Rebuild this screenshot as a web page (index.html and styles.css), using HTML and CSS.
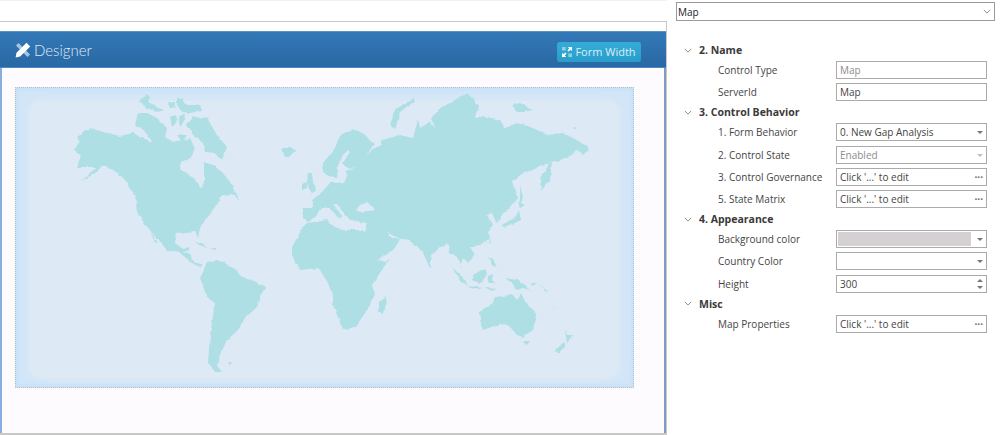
FILE: index.html
```html
<!DOCTYPE html>
<html lang="en">
<head>
    <meta charset="UTF-8">
    <title>Designer</title>
    <link rel="stylesheet" href="styles.css">
</head>
<body>
    <div class="workspace">
        <div class="tab-strip"></div>
        <div class="designer">
            <div class="designer-head">
                <div class="designer-title">
                    <svg class="title-icon" viewBox="0 0 16 16">
                        <path class="ruler" d="M1 3.5 3.5 1 15 12.5 12.5 15Z"/>
                        <path d="M11.5 0.8 15.2 4.5 5.2 14.5 0.6 15.4 1.5 10.8Z"/>
                    </svg>
                    <span>Designer</span>
                </div>
                <button class="width-button">
                    <svg class="width-icon" viewBox="0 0 10 10">
                        <path d="M5.8 0H10V4.2L8.6 2.8 6.6 4.6 5.4 3.4 7.2 1.4Z"/>
                        <path d="M4.2 10H0V5.8L1.4 7.2 3.4 5.4 4.6 6.6 2.8 8.6Z"/>
                        <path class="faint" d="M0 0H3.6V3.6H0ZM6.4 6.4H10V10H6.4Z"/>
                    </svg>
                    Form Width
                </button>
            </div>
            <div class="designer-body">
                <div class="map">
                    <!-- countries traced by hand, in page coordinates -->
                    <svg class="world" viewBox="16 88 617 299">
                        <defs>
                            <!-- roughens the straight segments into a coastline -->
                            <filter id="coast" x="0" y="0" width="100%" height="100%">
                                <feTurbulence type="fractalNoise" baseFrequency="0.14" numOctaves="2" seed="4"/>
                                <feDisplacementMap in="SourceGraphic" scale="3.5" xChannelSelector="R" yChannelSelector="G"/>
                                <feGaussianBlur stdDeviation="0.35"/>
                            </filter>
                        </defs>
                        <g class="land" filter="url(#coast)">
                            <!-- north and central america -->
                            <path d="M76 138 82 132 90 128 103 132 120 136 133 133 150 142 173 142 190 138 195 148 192 156 182 162 180 170 197 180 201 190 204 182 204 162 213 165 222 172 230 182 235 192 240 200 232 194 220 197 215 207 207 217 200 228 198 238 195 231 177 233 175 242 183 248 190 246 188 252 182 252 190 255 195 262 203 265 200 267 192 263 180 253 167 250 160 242 150 230 138 215 137 202 132 190 123 178 113 170 103 165 95 173 80 182 92 172 95 167 77 167 82 155 74 150 80 142Z"/>
                            <path d="M150 230 158 243 155 242ZM195 243 202 243 208 248 202 246ZM210 248 217 248 215 250Z"/>
                            <!-- arctic islands -->
                            <path d="M139 102 145 95 150 97 148 102 157 107 163 110 157 112 147 108ZM177 98 182 99 187 105 200 105 202 111 190 113 182 112 177 105ZM168 102 175 102 175 108 170 109Z"/>
                            <path d="M135 125 138 113 147 113 157 118 167 128 165 138 173 142 153 142 145 132 140 127ZM170 117 175 115 177 123 172 127ZM178 115 185 114 183 123 180 127ZM187 125 193 117 207 118 217 135 227 147 222 160 213 153 205 152 203 142 193 135ZM177 135 187 135 182 142Z"/>
                            <!-- south america -->
                            <path d="M200 278 207 262 217 260 233 267 243 277 265 286 257 307 245 318 238 330 227 340 220 355 217 365 222 372 215 372 208 362 210 335 215 303 207 297ZM228 363 232 363 230 366Z"/>
                            <!-- iceland, britain, ireland -->
                            <path d="M281 148 290 147 296 151 290 157 285 157ZM308 173 312 173 313 182 317 190 312 193 308 187 307 182ZM302 185 307 182 307 188 302 190Z"/>
                            <!-- eurasia with the black sea cut out -->
                            <path fill-rule="evenodd" d="M303 218 303 208 313 208 312 200 322 192 330 183 335 183 343 182 348 176 345 172 357 167 348 169 342 163 350 152 348 150 343 155 338 165 337 178 331 177 323 172 323 163 335 148 340 135 352 130 363 133 375 145 367 153 380 145 382 140 400 135 413 138 418 120 420 128 430 122 435 128 432 118 440 108 460 97 467 93 479 105 475 117 487 117 500 120 505 128 517 123 533 128 547 135 563 133 577 140 589 148 583 154 577 150 572 155 560 160 550 162 540 178 541 191 550 180 552 162 537 168 520 175 512 182 518 198 510 207 500 217 498 223 495 220 492 213 486 216 493 224 489 232 490 240 473 247 470 247 475 255 468 263 462 258 460 265 465 275 457 257 450 252 447 243 437 250 432 255 430 268 423 253 418 247 408 240 397 238 387 232 392 238 400 240 393 250 378 260 363 235 367 223 350 220 344 213 336 204 333 204 343 217 339 219 332 210 330 208 322 208 315 218 308 222ZM356 210 360 205 368 202 375 210 368 211 360 212Z"/>
                            <!-- africa and madagascar -->
                            <path d="M292 247 303 227 308 223 327 220 335 227 343 230 363 230 365 237 378 260 385 262 390 258 377 278 372 285 375 295 365 313 355 328 343 329 333 305 333 297 328 283 320 270 318 268 300 270 292 255ZM387 295 385 308 382 314 378 312 380 302Z"/>
                            <!-- japan, sakhalin and the arctic russian islands -->
                            <path d="M519 210 521 220 505 228 503 225 515 218ZM518 202 525 205 520 208ZM520 185 523 198 519 208 520 197ZM413 98 415 100 400 112 395 130 390 125 395 110ZM512 105 520 103 532 110 523 112 517 112ZM573 128 577 127 576 129Z"/>
                            <!-- south east asia -->
                            <path d="M430 265 433 267 432 268ZM453 268 467 282 468 285 462 282 455 273ZM468 286 483 288 480 290 468 287ZM473 275 485 268 487 275 480 283 473 280ZM488 277 493 275 492 280 495 283 490 283ZM488 257 493 260 497 267 492 265ZM490 240 491 243 489 243ZM485 288 498 289 490 291Z"/>
                            <path d="M505 278 517 280 525 285 532 291 523 288 517 290 512 283ZM532 283 537 283 533 286ZM538 284 547 290 546 291ZM553 307 556 309 554 309ZM572 301 573 302 572 303Z"/>
                            <!-- australia and new zealand -->
                            <path d="M479 312 490 305 497 297 512 294 517 300 520 293 528 305 537 315 533 330 523 337 517 335 510 327 500 324 483 330 480 320ZM523 341 530 341 527 346ZM555 350 565 342 565 347 558 353ZM565 330 568 335 573 335 567 342Z"/>
                        </g>
                    </svg>
                </div>
            </div>
        </div>
    </div>

    <div class="properties">
        <div class="object-select">
            <span>Map</span>
            <svg class="chevron" viewBox="0 0 10 6"><path d="M1 1 5 5 9 1"/></svg>
        </div>

        <div class="prop-group">
            <h3 class="group-title"><svg class="chevron" viewBox="0 0 10 6"><path d="M1 1 5 5 9 1"/></svg>2. Name</h3>
            <div class="prop-row"><label>Control Type</label><div class="field disabled">Map</div></div>
            <div class="prop-row"><label>ServerId</label><div class="field">Map</div></div>
        </div>

        <div class="prop-group">
            <h3 class="group-title"><svg class="chevron" viewBox="0 0 10 6"><path d="M1 1 5 5 9 1"/></svg>3. Control Behavior</h3>
            <div class="prop-row"><label>1. Form Behavior</label><div class="field">0. New Gap Analysis<i class="drop"></i></div></div>
            <div class="prop-row"><label>2. Control State</label><div class="field disabled">Enabled<i class="drop faded"></i></div></div>
            <div class="prop-row"><label>3. Control Governance</label><div class="field">Click '...' to edit<b class="dots">&middot;&middot;&middot;</b></div></div>
            <div class="prop-row"><label>5. State Matrix</label><div class="field">Click '...' to edit<b class="dots">&middot;&middot;&middot;</b></div></div>
        </div>

        <div class="prop-group">
            <h3 class="group-title"><svg class="chevron" viewBox="0 0 10 6"><path d="M1 1 5 5 9 1"/></svg>4. Appearance</h3>
            <div class="prop-row"><label>Background color</label><div class="field"><span class="swatch"></span><i class="drop"></i></div></div>
            <div class="prop-row"><label>Country Color</label><div class="field"><i class="drop"></i></div></div>
            <div class="prop-row"><label>Height</label><div class="field">300<span class="spin"><i></i><i></i></span></div></div>
        </div>

        <div class="prop-group">
            <h3 class="group-title"><svg class="chevron" viewBox="0 0 10 6"><path d="M1 1 5 5 9 1"/></svg>Misc</h3>
            <div class="prop-row"><label>Map Properties</label><div class="field">Click '...' to edit<b class="dots">&middot;&middot;&middot;</b></div></div>
        </div>
    </div>
</body>
</html>
```

FILE: styles.css
```css
/* General styling */
body {
    margin: 0;
    height: 435px;
    overflow: hidden;
    display: flex;
    font-family: "Open Sans", sans-serif;
    background-color: #ffffff;
}

/* Left side */
.workspace {
    width: 667px;
    height: 435px;
    flex-shrink: 0;
    display: flex;
    flex-direction: column;
    background-color: #ffffff;
}
.tab-strip {
    height: 21px;
    border-top: 1px solid #f0f0f0;
    box-sizing: border-box;
}
.designer {
    flex: 1;
    display: flex;
    flex-direction: column;
    border-top: 1px solid #c8c8c8;
    border-right: 1px solid #c8c8c8;
    border-bottom: 2px solid #c8c8c8;
    padding-top: 9px;
    min-height: 0;
}
.designer-head {
    height: 37px;
    display: flex;
    align-items: center;
    justify-content: space-between;
    padding: 0 25px 0 15px;
    background: linear-gradient(#3379b8, #2968a3);
    border-top: 1px solid #5a93c6;
    border-bottom: 1px solid #4a8ac6;
    box-sizing: border-box;
}
.designer-title {
    display: flex;
    align-items: center;
    gap: 3px;
    color: #dfebf5;
    font-family: Lato, sans-serif;
    font-weight: 300;
    font-size: 15px;
}
.title-icon {
    width: 16px;
    height: 16px;
    fill: #ffffff;
}
.title-icon .ruler {
    fill: #a9c6e0;
}
.width-button {
    width: 84px;
    height: 20px;
    padding: 0;
    margin-top: 4px;
    display: flex;
    align-items: center;
    justify-content: center;
    gap: 3px;
    border: none;
    border-radius: 3px;
    background: linear-gradient(#35acd8, #2a9dca);
    color: #d9f0f8;
    font-family: "Open Sans", sans-serif;
    font-size: 11px;
}
.width-icon {
    width: 10px;
    height: 10px;
    fill: #ffffff;
}
.width-icon .faint {
    fill: #8fd0e8;
}
.designer-body {
    flex: 1;
    background-color: #fefbff;
    border-left: 2px solid #86aede;
    border-right: 2px solid #7f9cc0;
    padding: 19px 30px 0 13px;
}
.map {
    position: relative;
    height: 301px;
    background-color: #d2e6f8;
    border: 1px dotted #b4bec8;
    box-sizing: border-box;
    box-shadow: inset 0 0 5px 1px #c3dff8;
}
/* lighter rounded field inside the blue edge of the map */
.map::before {
    content: "";
    position: absolute;
    inset: 13px 14px 9px 13px;
    border-radius: 14px;
    background-color: #dde9f5;
    box-shadow: 0 0 5px 2px #dde9f5;
}
.world {
    position: relative;
    display: block;
    width: 100%;
    height: 100%;
}
.land {
    fill: #aedfe5;
}

/* Right side */
.properties {
    flex: 1;
    padding: 2px 5px 0 9px;
    font-size: 10px;
    color: #444444;
}
.object-select {
    height: 19px;
    display: flex;
    align-items: center;
    justify-content: space-between;
    box-sizing: border-box;
    padding: 0 3px 0 1px;
    margin-bottom: 20px;
    border: 1px solid #9a9a9a;
    color: #222222;
}
.chevron {
    width: 8px;
    height: 5px;
    fill: none;
    stroke: #8a8a8a;
    stroke-width: 1.2;
}
.group-title {
    height: 18px;
    margin: 0;
    display: flex;
    align-items: center;
    gap: 7px;
    padding-left: 8px;
    font-size: 10.5px;
    font-weight: 700;
    color: #3a3a3a;
}
.prop-row {
    height: 22.2px;
    display: flex;
    align-items: center;
    padding-left: 42px;
}
.prop-row label {
    width: 118px;
    flex-shrink: 0;
    white-space: nowrap;
}
.field {
    position: relative;
    width: 151px;
    height: 18px;
    box-sizing: border-box;
    padding-left: 3px;
    line-height: 16px;
    border: 1px solid #ababab;
    color: #444444;
    background-color: #ffffff;
}
.field.disabled {
    color: #8c8c8c;
}
.drop {
    position: absolute;
    right: 3px;
    top: 7px;
    border-left: 3px solid transparent;
    border-right: 3px solid transparent;
    border-top: 3px solid #777777;
}
.drop.faded {
    border-top-color: #c0c0c0;
}
.dots {
    position: absolute;
    right: 3px;
    top: 0;
    font-size: 10px;
    color: #666666;
}
.swatch {
    display: block;
    width: 133px;
    height: 14px;
    margin: 1px 0 0 -2px;
    background-color: #d4d0d4;
}
.spin i {
    position: absolute;
    right: 3px;
    border-left: 3px solid transparent;
    border-right: 3px solid transparent;
}
.spin i:first-child {
    top: 3px;
    border-bottom: 3px solid #777777;
}
.spin i:last-child {
    top: 10px;
    border-top: 3px solid #777777;
}
```
